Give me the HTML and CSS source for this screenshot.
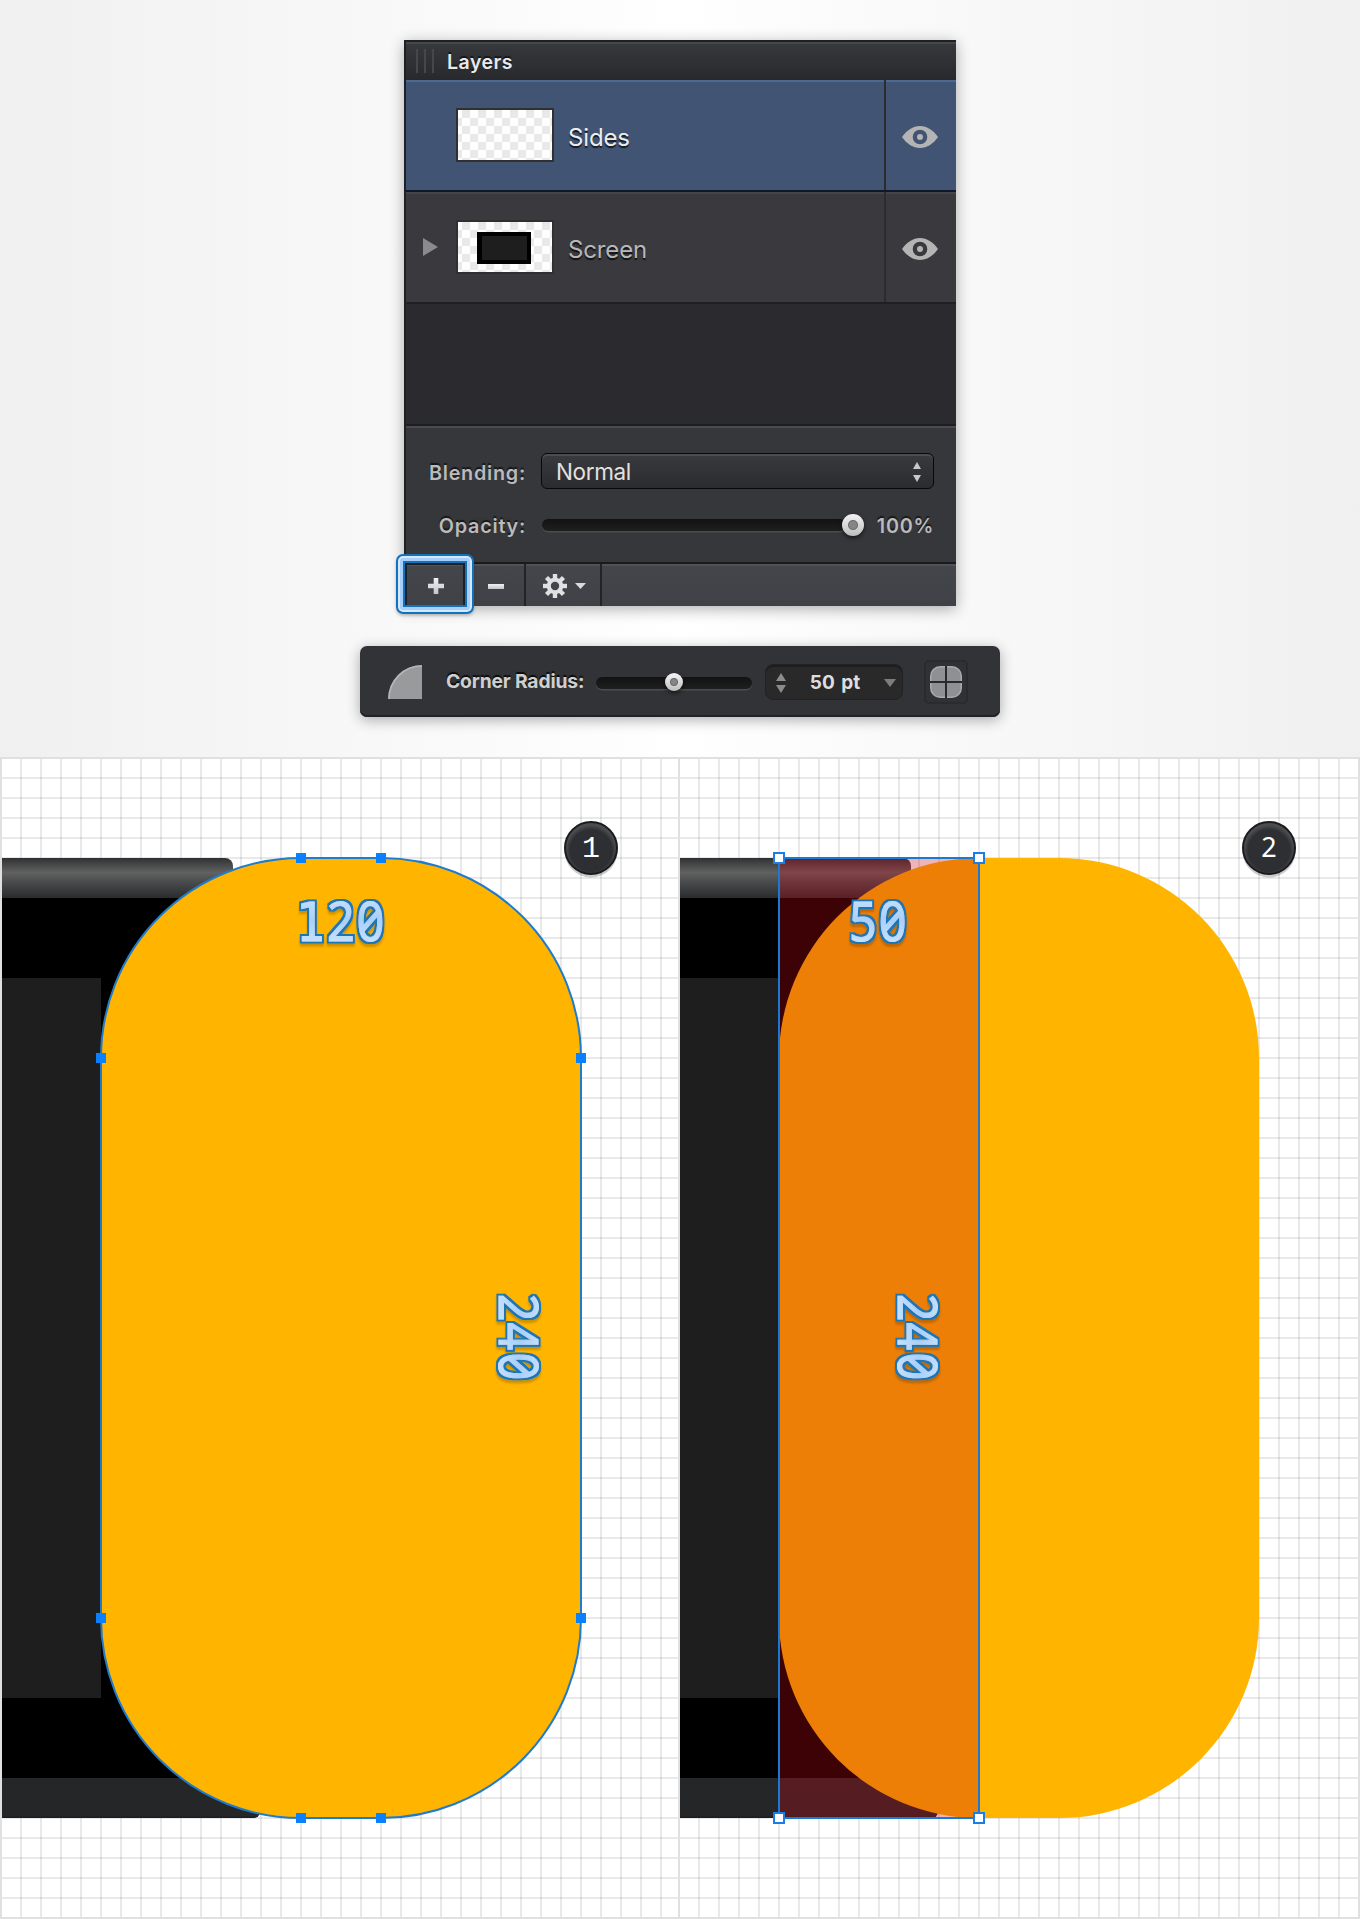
FILE: index.html
```html
<!DOCTYPE html>
<html lang="en">
<head>
<meta charset="utf-8">
<title>Layers</title>
<link rel="stylesheet" href="styles.css">
</head>
<body>
<svg class="defs" width="0" height="0">
  <defs>
    <pattern id="grid" x="0" y="757" width="20" height="20" patternUnits="userSpaceOnUse">
      <path d="M0 1H20" stroke="#000" stroke-opacity=".085" stroke-width="2"/>
      <path d="M1 0V20" stroke="#000" stroke-opacity=".085" stroke-width="2"/>
    </pattern>
    <linearGradient id="bezel" x1="0" y1="0" x2="0" y2="1">
      <stop offset="0" stop-color="#2e2f30"/><stop offset=".08" stop-color="#3b3c3e"/><stop offset=".36" stop-color="#616161"/><stop offset=".6" stop-color="#4a4b4c"/><stop offset="1" stop-color="#2a2b2d"/>
    </linearGradient>
    <linearGradient id="digit" x1="0" y1="0" x2="0" y2="1">
      <stop offset="0" stop-color="#d8ebff"/><stop offset=".5" stop-color="#a9d0fa"/><stop offset="1" stop-color="#d8ebff"/>
    </linearGradient>
    <filter id="outline" x="-20%" y="-20%" width="140%" height="150%">
      <feMorphology in="SourceAlpha" operator="dilate" radius="1.5" result="grown"/>
      <feFlood flood-color="#1b76b5"/>
      <feComposite in2="grown" operator="in" result="edge"/>
      <feOffset in="grown" dy="3"/>
      <feGaussianBlur stdDeviation="1"/>
      <feComponentTransfer result="shade"><feFuncA type="linear" slope=".2"/></feComponentTransfer>
      <feMerge><feMergeNode in="shade"/><feMergeNode in="edge"/><feMergeNode in="SourceGraphic"/></feMerge>
    </filter>
    <linearGradient id="metal" x1="0" y1="0" x2="0" y2="1">
      <stop offset="0" stop-color="#f0f1f6"/><stop offset="1" stop-color="#c3c5cb"/>
    </linearGradient>
    <radialGradient id="badge" cx=".5" cy=".55" r=".5">
      <stop offset=".8" stop-color="#2e2f33"/><stop offset=".97" stop-color="#4b4c50"/>
    </radialGradient>
    <clipPath id="board"><rect x="2" y="759" width="680" height="1158"/></clipPath>
    <symbol id="eye" viewBox="0 0 36 22">
      <path fill="#b4b4b5" fill-rule="evenodd" d="M0 11C5 4 11 0 18 0s13 4 18 11c-5 7-11 11-18 11S5 18 0 11zM18 3.7a7.3 7.3 0 1 0 0 14.6 7.3 7.3 0 0 0 0-14.6zM18 8a3 3 0 1 1 0 6 3 3 0 0 1 0-6z"/>
    </symbol>
    <g id="device" clip-path="url(#board)">
      <path fill="url(#bezel)" d="M2 858H225a8 8 0 0 1 8 8V898H2z"/>
      <path fill="#000" d="M2 898H233V1778H2z"/>
      <path fill="#1e1e1e" d="M2 978H101V1698H2z"/>
      <path fill="#252628" d="M2 1778H260V1812a6 6 0 0 1-6 6H2z"/>
      <path fill="#1d1e20" d="M2 1816.5H257L254 1818H2z"/>
    </g>
  </defs>
</svg>

<main class="page">
  <section class="stage">
    <div class="panel">
      <header class="panel-head"><i class="grip"></i><span>Layers</span></header>
      <div class="layer layer-active">
        <span class="arrow"></span>
        <span class="thumb"></span>
        <span class="name">Sides</span>
        <span class="visible"><svg width="36" height="22"><use href="#eye"/></svg></span>
      </div>
      <div class="layer">
        <span class="arrow"><svg width="15" height="18"><path d="M0 0L15 9L0 18z" fill="#8b8b8d"/></svg></span>
        <span class="thumb"><i class="mini"></i></span>
        <span class="name">Screen</span>
        <span class="visible"><svg width="36" height="22"><use href="#eye"/></svg></span>
      </div>
      <div class="empty"></div>
      <div class="options">
        <span class="label blending">Blending:</span>
        <div class="select"><span>Normal</span>
          <svg width="8" height="20" viewBox="0 0 8 20"><path d="M4 0L8 7H0zM0 13H8L4 20z" fill="#c8c8c9"/></svg>
        </div>
        <span class="label opacity">Opacity:</span>
        <div class="opacity-row"><div class="track"></div><i class="knob"></i><span class="label percent">100%</span></div>
      </div>
      <footer class="tools">
        <span class="tool add"><svg width="16" height="16"><path d="M5.7 0h4.6v5.7H16v4.6h-5.7V16H5.7v-5.7H0V5.7h5.7z" fill="url(#metal)"/></svg></span>
        <span class="tool remove"><svg width="16" height="5"><rect width="16" height="5" fill="url(#metal)"/></svg></span>
        <span class="tool gear">
          <svg width="24" height="24" viewBox="-12 -12 24 24"><g fill="#dfe0e4"><g id="teeth"><rect x="-2.2" y="-12" width="4.4" height="24"/><rect x="-12" y="-2.2" width="24" height="4.4"/></g><use href="#teeth" transform="rotate(45)"/><circle r="8.3"/></g><circle r="4.2" fill="#42454a"/></svg>
          <svg width="11" height="6"><path d="M0 0h11L5.5 6z" fill="#d9dade"/></svg>
        </span>
      </footer>
      <i class="focus"></i>
    </div>

    <div class="corner">
      <svg class="quarter" width="34" height="34"><path d="M34 0V34H0A34 34 0 0 1 34 0z" fill="#999a9b"/><path d="M1 34A33 33 0 0 1 34 1" fill="none" stroke="#b5b6b7" stroke-width="1.6"/></svg>
      <span class="corner-label">Corner Radius:</span>
      <div class="track corner-track"><i class="knob small"></i></div>
      <div class="field">
        <svg width="10" height="20" viewBox="0 0 10 20"><path d="M5 0L10 8H0zM0 12H10L5 20z" fill="#8c8c8d"/></svg>
        <span>50 pt</span>
        <svg width="12" height="8"><path d="M0 0H12L6 8z" fill="#7d7d7e"/></svg>
      </div>
      <div class="corners">
        <svg width="32" height="32"><rect x=".75" y=".75" width="30.5" height="30.5" rx="9.3" fill="#8f9092" stroke="#a9aaac" stroke-width="1.5"/><path d="M16 0V32M0 16H32" stroke="#28292c" stroke-width="2"/></svg>
      </div>
    </div>
  </section>

  <section class="boards">
    <svg width="678" height="1162" viewBox="0 757 678 1162">
      <rect y="757" width="678" height="1162" fill="#fff"/>
      <rect y="757" width="678" height="1162" fill="url(#grid)"/>
      <path d="M0 758H678M1 757V1919M0 1918H678" stroke="#e0e0e0" stroke-width="2"/>
      <use href="#device"/>
      <rect x="101" y="858" width="480" height="960" rx="200" fill="#ffb400" stroke="#1f7bcb" stroke-width="2"/>
      <path fill="#0a80ff" d="M296 853h10v10h-10zM376 853h10v10h-10zM296 1813h10v10h-10zM376 1813h10v10h-10zM96 1053h10v10h-10zM96 1613h10v10h-10zM576 1053h10v10h-10zM576 1613h10v10h-10z"/>
      <g class="dim"><text transform="translate(296 940.5) scale(.9 1)" x="0 34.4 67.3"><tspan class="one">1</tspan>20</text></g>
      <g class="dim"><text transform="translate(498.7 1293.7) rotate(90) scale(.9 1)" x="0 32.1 65.4">240</text></g>
      <circle cx="591" cy="851" r="26.5" fill="#000" fill-opacity=".2"/>
      <circle cx="591" cy="848" r="26" fill="url(#badge)" stroke="#1b1b1e" stroke-width="2"/>
      <text class="num one" x="591" y="857">1</text>
    </svg>
    <svg width="682" height="1162" viewBox="0 757 682 1162">
      <rect y="757" width="682" height="1162" fill="#fff"/>
      <rect y="757" width="682" height="1162" fill="url(#grid)"/>
      <path d="M0 758H682M1 757V1919M0 1918H682M681 757V1919" stroke="#e0e0e0" stroke-width="2"/>
      <use href="#device"/>
      <rect x="101" y="858" width="480" height="960" rx="200" fill="#ffb400"/>
      <rect x="101" y="858" width="200" height="960" fill="rgb(200,5,20)" fill-opacity=".3"/>
      <rect x="101" y="858" width="200" height="960" fill="none" stroke="#1a79d6" stroke-width="2"/>
      <path fill="#fff" stroke="#1a7ee6" stroke-width="2" d="M96 853h10v10h-10zM296 853h10v10h-10zM96 1813h10v10h-10zM296 1813h10v10h-10z"/>
      <g class="dim"><text transform="translate(171 940.5) scale(.9 1)" x="0 33">50</text></g>
      <g class="dim"><text transform="translate(219.7 1293.7) rotate(90) scale(.9 1)" x="0 32.1 65.4">240</text></g>
      <circle cx="591" cy="851" r="26.5" fill="#000" fill-opacity=".2"/>
      <circle cx="591" cy="848" r="26" fill="url(#badge)" stroke="#1b1b1e" stroke-width="2"/>
      <text class="num" x="591" y="857">2</text>
    </svg>
  </section>
</main>
</body>
</html>
```
FILE: styles.css
```css
* { box-sizing: border-box; }
body { margin: 0; font-family: Inter, Roboto, "Liberation Sans", sans-serif; }
svg { display: block; flex: none; }
.defs { position: absolute; }
.page { width: 1360px; height: 1919px; overflow: hidden; }
.stage {
  height: 757px; padding-top: 40px;
  display: flex; flex-direction: column; align-items: center; gap: 40px;
  background: linear-gradient(90deg, #f0f0f0, #fbfbfb 38%, #fff 50%, #fbfbfb 62%, #f0f0f0);
}
.panel {
  position: relative; width: 552px; height: 566px;
  border-left: 2px solid #1f2022; background: #2b2a2e;
  box-shadow: 0 3px 14px rgba(0,0,0,.32);
}
.panel-head {
  height: 40px; padding: 2px 0 0 10px; display: flex; align-items: center; gap: 13px;
  border-top: 2px solid #1f2023; box-shadow: inset 0 2px #46474a;
  background: linear-gradient(#38393c, #28292c);
  font-size: 19.5px; font-weight: 600; line-height: 30px; color: #e9e9ea; letter-spacing: .5px;
  text-shadow: 0 -2px 1px rgba(0,0,0,.6);
}
.grip {
  width: 18px; height: 24px; margin-top: -2px;
  background: repeating-linear-gradient(90deg, #46474a 0 2px, transparent 2px 8px);
}
.layer {
  height: 112px; display: grid; align-items: center;
  grid-template-columns: 50px 98px 330px 72px;
  background: #3a393d; border-bottom: 2px solid #202023;
  box-shadow: inset 0 2px #454548;
}
.layer-active { background: #425473; border-bottom-color: #0f1829; box-shadow: inset 0 2px #4e6890; }
.arrow { padding-left: 17px; }
.thumb {
  height: 54px; border: 2px solid #303033; display: flex; justify-content: center; align-items: center;
  background: repeating-conic-gradient(#e9e9e9 0 25%, #fff 0 50%) 4px 8px / 16px 16px padding-box;
}
.mini { width: 54px; height: 32px; background: #1e1e1e; border: 4px solid #000; border-left-width: 5px; margin: 2px 2px 0 0; }
.name { padding: 5px 0 0 14px; font-size: 24px; line-height: 30px; letter-spacing: -.15px; color: #b8b7b8; text-shadow: 0 2px 1px rgba(0,0,0,.7); }
.layer-active .name { color: #ebecee; }
.visible { height: 110px; border-left: 2px solid #2c2c30; display: flex; align-items: center; padding: 4px 0 0 16px; }
.empty { height: 120px; }
.options {
  height: 140px; padding: 27px 22px 0 0; display: grid;
  grid-template-columns: 120px 393px; grid-template-rows: 36px 36px; column-gap: 15px; row-gap: 18px;
  border-top: 2px solid #1e1e20; border-bottom: 2px solid #1b1b1d;
  background: #36373a; box-shadow: inset 0 2px #4a4b4d;
}
.label { font-size: 19.8px; font-weight: 600; line-height: 36px; color: #bbbabc; text-align: right; letter-spacing: .75px; white-space: nowrap; text-shadow: 0 -2px 1px rgba(0,0,0,.6); }
.blending { padding-top: 2px; }
.select {
  height: 36px; border: 1.5px solid #08080a; border-radius: 6px; padding: 1px 12px 0 14px;
  display: flex; align-items: center; justify-content: space-between;
  background: linear-gradient(#393a3d, #2b2c30); box-shadow: inset 0 2px #4c4d50;
  color: #e2e1e0; font-size: 22.5px; letter-spacing: -.35px;
}
.opacity-row { display: flex; align-items: center; height: 36px; }
.opacity { padding-top: 1px; }
.track {
  width: 304px; height: 12px; margin-left: 1px; border-radius: 6px;
  background: linear-gradient(#121212, #1f1f1f); box-shadow: 0 1.5px #4b4c4e;
}
.knob {
  flex: none; width: 22px; height: 22px; margin-left: -4px; border-radius: 50%;
  background: radial-gradient(circle, #858585 0 3.5px, #6b6b6b 4.5px, transparent 5.5px), linear-gradient(#f3f3f3, #bdbdbd);
  box-shadow: 0 2px 4px rgba(0,0,0,.6);
}
.percent { margin-left: 13px; padding-top: 1px; letter-spacing: .7px; font-weight: 600; }
.tools {
  height: 42px; display: flex; background: linear-gradient(#43464a, #3f4147); box-shadow: inset 0 2px #505256;
}
.tool { display: flex; align-items: center; justify-content: center; gap: 8px; padding-top: 2px; border-right: 2px solid #222327; }
.add { width: 62px; }
.remove { width: 58px; }
.gear { width: 76px; }
.gear svg:first-child { margin: -1px 0 0 2px; }
.focus {
  position: absolute; left: -10px; top: 514px; width: 78px; height: 60px; border-radius: 7px;
  border: 2px solid #1470b8; 
  box-shadow: inset 0 0 0 2px #d4e9ff, inset 0 0 0 5px #a6cffa, inset 0 0 0 7px #1470b8, 0 2px 3px rgba(0,0,0,.2);
}
.focus::after { content: ""; position: absolute; inset: 7px; border: 2px solid #1d2025; border-bottom: 0; }
.corner {
  width: 640px; height: 71px; border-radius: 7px; background: #323337; display: flex; align-items: center; padding-left: 28px;
  box-shadow: inset 0 -2px #212225, 0 3px 14px rgba(0,0,0,.32);
}
.corner-label { width: 150px; margin: -2px 0 0 24px; font-size: 19.3px; font-weight: 700; line-height: 30px; color: #cfcfcf; letter-spacing: -.15px; white-space: nowrap; text-shadow: 0 -2px 1px rgba(0,0,0,.8); }
.corner-track { width: 156px; margin-left: 0; margin-top: 2px; display: flex; align-items: center; justify-content: center; flex: none; }
.knob.small { width: 18px; height: 18px; margin: -2px 0 0; background: radial-gradient(circle, #858585 0 2.5px, #666 3.5px, transparent 4.5px), linear-gradient(#f6f6f6, #bdbdbd); }
.field {
  width: 138px; height: 36px; margin-left: 13px; border-radius: 8px; padding: 2px 6px 0 10px;
  display: flex; align-items: center; justify-content: space-between;
  background: #29292a; border: 1px solid #222224; box-shadow: inset 0 2px #1d1d1f;
  font-size: 19px; font-weight: 700; color: #dedede; word-spacing: 2px;
}
.corners {
  width: 44px; height: 44px; margin-left: 21px; border-radius: 5px; display: flex; align-items: center; justify-content: center;
  background: #303135; border: 2px solid #2a2b2e;
}
.boards { display: flex; }
.dim text {
  font-family: "Noto Sans", "DejaVu Sans", sans-serif; font-size: 54px; font-feature-settings: "zero";
  fill: url(#digit); stroke: url(#digit); stroke-width: 1px;
}
.dim { filter: url(#outline); }
.dim .one { font-family: "DejaVu Sans Mono", monospace; font-size: 53px; }
.num { font-family: "Noto Sans", sans-serif; font-size: 27px; fill: #fff; text-anchor: middle; }
.num.one { font-family: "Liberation Mono", monospace; font-size: 30px; }
```
